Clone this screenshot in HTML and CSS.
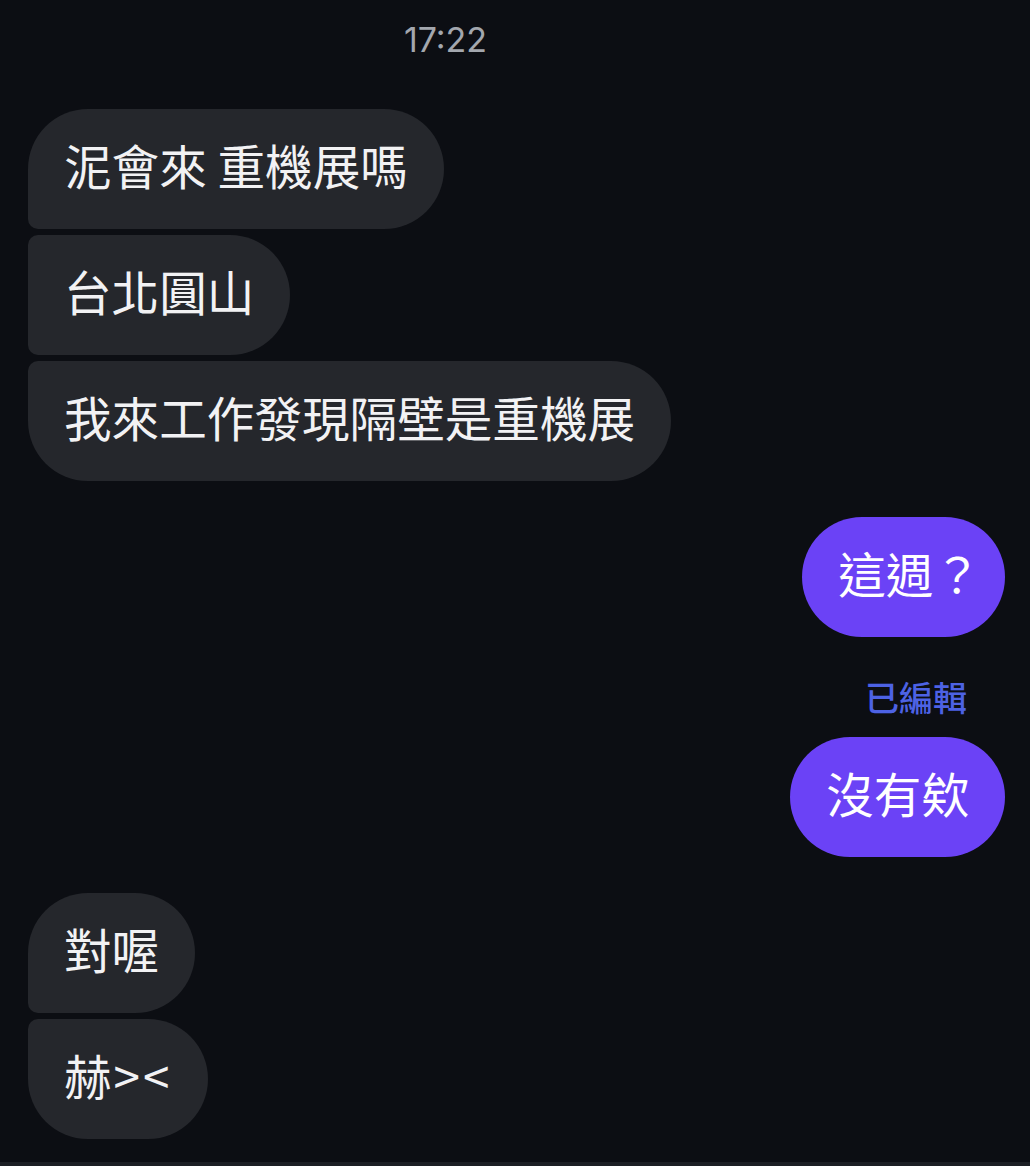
FILE: index.html
```html
<!DOCTYPE html>
<html lang="zh-Hant">
<head>
    <meta charset="UTF-8">
    <meta name="viewport" content="width=device-width, initial-scale=1.0">
    <title>Chat</title>
    <link rel="stylesheet" href="styles.css">
</head>
<body>
    <div id="chat">
        <div class="time">17:22</div>

        <!-- Incoming group -->
        <div class="group in">
            <div class="bubble first">泥會來 重機展嗎</div>
            <div class="bubble middle">台北圓山</div>
            <div class="bubble last">我來工作發現隔壁是重機展</div>
        </div>

        <!-- Outgoing -->
        <div class="group out">
            <div class="bubble">這週<span class="punct">？</span></div>
            <div class="edited">已編輯</div>
            <div class="bubble second">沒有欸</div>
        </div>

        <!-- Incoming group -->
        <div class="group in">
            <div class="bubble first">對喔</div>
            <div class="bubble last">赫<span class="wide">&gt;&lt;</span></div>
        </div>
    </div>
    <div class="footer"></div>
</body>
</html>
```

FILE: styles.css
```css
body {
    margin: 0;
    height: 1166px;
    overflow: hidden;
    background-color: #0c0e13;
    font-family: "Noto Sans CJK TC", "Noto Sans", sans-serif;
    color: #f2f2f4;
}

#chat {
    display: flex;
    flex-direction: column;
    padding: 0 25px 0 28px;
}

.time {
    height: 80px;
    line-height: 80px;
    padding-right: 142px;
    text-align: center;
    font-family: Inter, Roboto, sans-serif;
    font-size: 34px;
    color: #a3a7ae;
    margin-bottom: 29px;
}

.group {
    display: flex;
    flex-direction: column;
    gap: 6px;
}

.group.in {
    align-items: flex-start;
}

.group.out {
    align-items: flex-end;
    gap: 0;
    margin-top: 36px;
    margin-bottom: 36px;
}

.bubble {
    display: flex;
    align-items: center;
    height: 120px;
    padding: 0 36px 9px;
    font-size: 47.6px;
    border-radius: 60px;
    white-space: nowrap;
    box-sizing: border-box;
}

.in .bubble {
    background-color: #25272c;
}

.in .first {
    border-radius: 60px 60px 60px 10px;
}

.in .middle {
    border-radius: 10px 60px 60px 10px;
}

.in .last {
    border-radius: 10px 60px 60px 60px;
}

.out .bubble {
    background-color: #6b42f6;
    color: #ffffff;
}

/* the full-width ? sits narrower in the phone font */
.punct {
    margin-right: -12px;
}

.wide {
    letter-spacing: 3px;
    margin-left: 2px;
}

.edited {
    height: 40px;
    line-height: 40px;
    margin-top: 40px;
    margin-bottom: 20px;
    padding-right: 38px;
    font-size: 34px;
    font-weight: 500;
    color: #4d62e4;
}

.footer {
    position: absolute;
    left: 0;
    right: 0;
    top: 1162px;
    height: 10px;
    background-color: #1c1f24;
}
```
